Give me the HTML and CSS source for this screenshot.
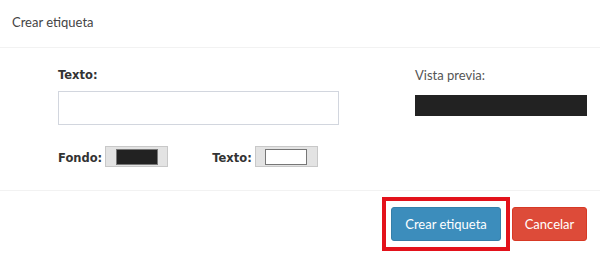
FILE: index.html
```html
<!DOCTYPE html>
<html lang="es">
<head>
  <meta charset="UTF-8" />
  <title>Crear etiqueta</title>
  <link rel="stylesheet" href="styles.css">
</head>
<body>
  <div class="modal">
    <div class="modal-header">
      <h4>Crear etiqueta</h4>
    </div>

    <div class="modal-body">
      <div class="col-left">
        <label class="lbl" for="texto">Texto:</label>
        <input type="text" id="texto" class="txt-input" />
        <div class="colors">
          <div class="color-row">
            <span class="lbl">Fondo:</span>
            <span class="swatch"><span class="swatch-inner dark"></span></span>
          </div>
          <div class="color-row">
            <span class="lbl">Texto:</span>
            <span class="swatch"><span class="swatch-inner light"></span></span>
          </div>
        </div>
      </div>
      <div class="col-right">
        <div class="preview-label">Vista previa:</div>
        <div class="preview"></div>
      </div>
    </div>

    <div class="modal-footer">
      <span class="highlight">
        <button class="btn btn-primary">Crear etiqueta</button>
      </span>
      <button class="btn btn-danger">Cancelar</button>
    </div>
  </div>
</body>
</html>
```

FILE: styles.css
```css
body {
  margin: 0;
  background: #fff;
  font-family: 'Lato', 'Open Sans', sans-serif;
  color: #333;
}
.modal {
  width: 600px;
  height: 263px;
}
.modal-header {
  height: 47px;
  padding: 0 12px;
  border-bottom: 1px solid #f2f2f2;
  display: flex;
  align-items: center;
}
.modal-header h4 {
  margin: 0;
  margin-top: -3px;
  font-size: 13px;
  font-weight: normal;
  color: #444;
}
.modal-body {
  height: 142px;
  display: flex;
  border-bottom: 1px solid #f2f2f2;
}
.col-left {
  width: 280px;
  margin-left: 58px;
  padding-top: 20px;
}
.lbl {
  display: block;
  font-family: 'DejaVu Sans', Verdana, sans-serif;
  font-weight: bold;
  font-size: 11.5px;
  color: #333;
  height: 15px;
}
.txt-input {
  display: block;
  box-sizing: border-box;
  width: 281px;
  height: 34px;
  margin-top: 8px;
  border: 1px solid #d2d6de;
  background: #fff;
}
.colors {
  display: flex;
  gap: 44px;
  margin-top: 21px;
}
.color-row {
  display: flex;
  align-items: center;
  gap: 3px;
}
.color-row .lbl {
  height: auto;
  margin-top: 3px;
}
.swatch {
  display: flex;
  align-items: center;
  justify-content: center;
  box-sizing: border-box;
  width: 63px;
  height: 21px;
  background: #e3e3e3;
  border: 1px solid #c8c8c8;
}
.swatch-inner {
  box-sizing: border-box;
  width: 42px;
  height: 16px;
  border: 1px solid #777;
}
.swatch-inner.dark { background: #222; }
.swatch-inner.light { background: #fff; }
.col-right {
  margin-left: 77px;
  padding-top: 19px;
}
.preview-label {
  font-size: 13px;
  color: #555;
  height: 16px;
}
.preview {
  width: 172px;
  height: 21px;
  margin-top: 12px;
  background: #222;
}
.modal-footer {
  display: flex;
  justify-content: flex-end;
  align-items: center;
  gap: 2px;
  padding: 6px 13px 0 0;
}
.highlight {
  display: inline-flex;
  padding: 6px 5px;
  border: 4px solid #e3121b;
}
.btn {
  font-family: 'Lato', 'Open Sans', sans-serif;
  font-size: 13px;
  color: #fff;
  border: none;
  border-radius: 3px;
  height: 34px;
  padding: 0 10px;
  cursor: pointer;
}
.btn-primary {
  width: 110px;
  background: #3c8dbc;
  border: 1px solid #367fa9;
}
.btn-danger {
  width: 75px;
  background: #dd4b39;
  border: 1px solid #d73925;
}
```
